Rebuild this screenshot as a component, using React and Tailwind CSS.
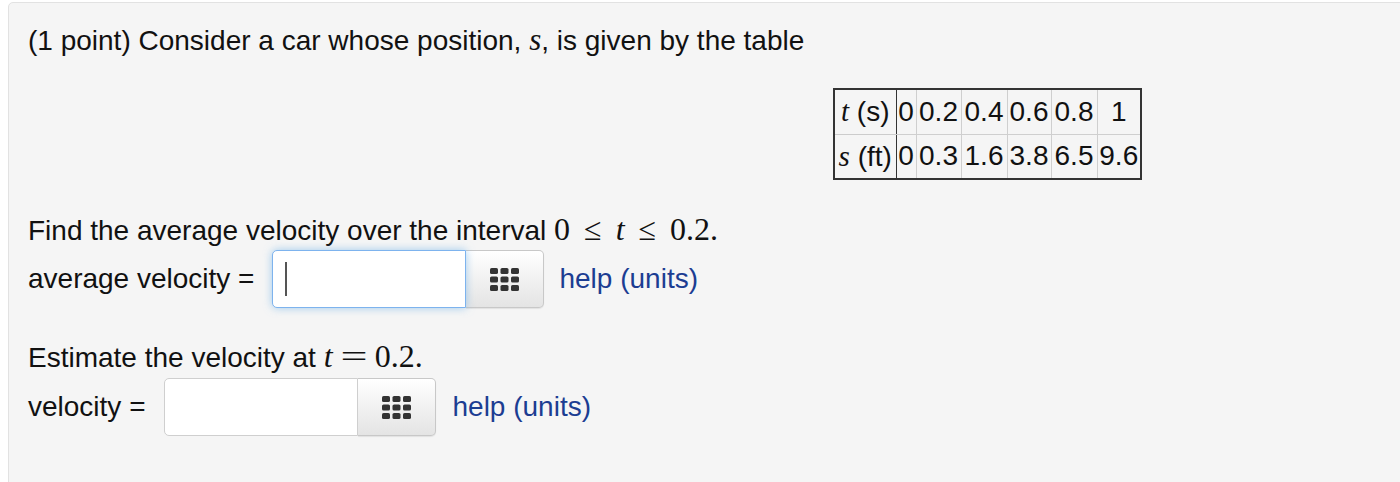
import React from "react";

function GridIcon() {
  const xs = [0, 10.5, 21];
  const ys = [0, 8.5, 17];
  return (
    <svg width="29" height="23" viewBox="0 0 29 23">
      {ys.map((y) =>
        xs.map((x) => (
          <rect key={`${x}-${y}`} x={x} y={y} width="8" height="6" rx="1.6" fill="#333" />
        ))
      )}
    </svg>
  );
}

function AnswerBox({ focused }) {
  return (
    <div className="flex h-[58px]">
      <div
        className={
          focused
            ? "relative flex h-full w-[194px] items-center rounded-l-[5px] border border-[#7db3ee] bg-white shadow-[0_0_8px_rgba(102,175,233,0.6)]"
            : "relative flex h-full w-[194px] items-center rounded-l-[5px] border border-[#cfcfcf] bg-white"
        }
      >
        {focused && <div className="ml-[12px] h-[34px] w-[2px] bg-[#555]" />}
      </div>
      <div className="flex h-full w-[78px] items-center justify-center rounded-r-[5px] border border-l-0 border-[#c8c8c8] bg-gradient-to-b from-white to-[#e4e4e4] shadow-[0_1px_1px_rgba(0,0,0,0.08)]">
        <GridIcon />
      </div>
    </div>
  );
}

const M = "font-['Liberation_Serif',serif] leading-none";

export default function App() {
  const top = ["0", "0.2", "0.4", "0.6", "0.8", "1"];
  const bot = ["0", "0.3", "1.6", "3.8", "6.5", "9.6"];
  const widths = ["w-[20px]", "w-[45px]", "w-[46px]", "w-[44px]", "w-[46px]", "w-[44px]"];
  return (
    <div className="h-[482px] w-[1400px] overflow-hidden bg-white font-['Liberation_Sans',Arial,sans-serif] text-[28px] text-[#111]">
      <div className="ml-[8px] mt-[2px] h-[520px] w-[1420px] rounded-tl-[5px] border border-[#e2e2e2] bg-[#f5f5f5] pl-[19px] pt-[21px]">
        <div className="h-[30px] leading-[30px]">
          (1 point) Consider a car whose position, <span className={`${M} italic text-[31px]`}>s</span>, is given by the table
        </div>

        <div className="ml-[805px] mt-[34px]">
          <table className="border-collapse border-2 border-[#333] leading-[28px]">
            <tbody>
              <tr className="h-[45px]">
                <td className="w-[62px] border-r border-r-[#333] border-b border-b-[#ccc] px-0 text-center whitespace-nowrap">
                  <span className={`${M} italic text-[29px]`}>t</span> (s)
                </td>
                {top.map((v, i) => (
                  <td key={i} className={`${widths[i]} border border-[#cfcfcf] px-0 text-center`}>
                    {v}
                  </td>
                ))}
              </tr>
              <tr className="h-[45px]">
                <td className="w-[62px] border-r border-r-[#333] px-0 text-center whitespace-nowrap">
                  <span className={`${M} italic text-[29px]`}>s</span> (ft)
                </td>
                {bot.map((v, i) => (
                  <td key={i} className={`${widths[i]} border border-[#cfcfcf] px-0 text-center`}>
                    {v}
                  </td>
                ))}
              </tr>
            </tbody>
          </table>
        </div>

        <div className="mt-[33px] h-[30px] leading-[30px]">
          Find the average velocity over the interval{" "}
          <span className={`${M} text-[32px]`}>
            0<span className="mx-[14px]">≤</span><span className="italic">t</span><span className="mx-[14px]">≤</span>0.2.
          </span>
        </div>

        <div className="mt-[7px] flex items-center">
          <span className="mr-[18px]">average velocity =</span>
          <AnswerBox focused />
          <a className="ml-[15px] text-[#1c3d92]">help (units)</a>
        </div>

        <div className="mt-[32px] h-[30px] leading-[30px]">
          Estimate the velocity at{" "}
          <span className={`${M} text-[32px]`}>
            <span className="italic">t</span>
            <span className="mx-[12px] inline-block scale-x-150">=</span>0.2.
          </span>
        </div>

        <div className="mt-[8px] flex items-center">
          <span className="mr-[18px]">velocity =</span>
          <AnswerBox />
          <a className="ml-[17px] text-[#1c3d92]">help (units)</a>
        </div>
      </div>
    </div>
  );
}
